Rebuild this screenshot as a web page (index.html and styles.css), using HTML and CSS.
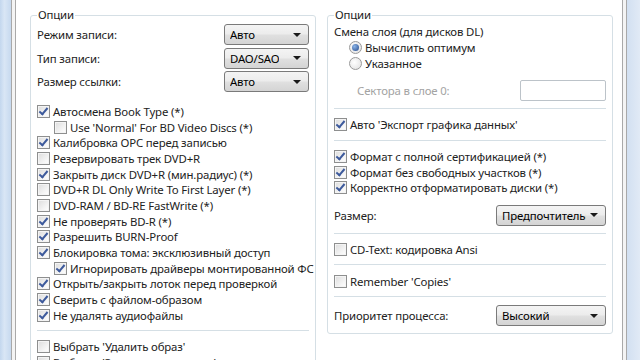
FILE: index.html
```html
<!doctype html>
<html>
<head>
    <meta charset="UTF-8">
    <title>Опции записи</title>
    <link rel="stylesheet" href="styles.css">
</head>
<body>
    <div class="window">
        <div class="frame frame-left"></div>
        <div class="edge"></div>
        <div class="page">
            <fieldset class="group group-left">
                <legend>Опции</legend>
                <div class="field">
                    <span>Режим записи:</span>
                    <div class="combo combo-small"><span>Авто</span><i class="arrow"></i></div>
                </div>
                <div class="field">
                    <span>Тип записи:</span>
                    <div class="combo combo-small"><span>DAO/SAO</span><i class="arrow"></i></div>
                </div>
                <div class="field">
                    <span>Размер ссылки:</span>
                    <div class="combo combo-small"><span>Авто</span><i class="arrow"></i></div>
                </div>

                <ul class="checks checks-main">
                    <li><span class="cb on"></span>Автосмена Book Type (*)</li>
                    <li class="sub"><span class="cb"></span>Use 'Normal' For BD Video Discs (*)</li>
                    <li><span class="cb on"></span>Калибровка OPC перед записью</li>
                    <li><span class="cb"></span>Резервировать трек DVD+R</li>
                    <li><span class="cb on"></span>Закрыть диск DVD+R (мин.радиус) (*)</li>
                    <li><span class="cb"></span>DVD+R DL Only Write To First Layer (*)</li>
                    <li><span class="cb"></span>DVD-RAM / BD-RE FastWrite (*)</li>
                    <li><span class="cb on"></span>Не проверять BD-R (*)</li>
                    <li><span class="cb on"></span>Разрешить BURN-Proof</li>
                    <li><span class="cb on"></span>Блокировка тома: эксклюзивный доступ</li>
                    <li class="sub"><span class="cb on"></span>Игнорировать драйверы монтированной ФС</li>
                    <li><span class="cb on"></span>Открыть/закрыть лоток перед проверкой</li>
                    <li><span class="cb on"></span>Сверить с файлом-образом</li>
                    <li><span class="cb on"></span>Не удалять аудиофайлы</li>
                </ul>
                <hr class="sep">
                <ul class="checks">
                    <li><span class="cb"></span>Выбрать 'Удалить образ'</li>
                    <li><span class="cb"></span>Выбрать 'Закрыть программу'</li>
                </ul>
            </fieldset>

            <fieldset class="group group-right">
                <legend>Опции</legend>
                <div class="caption">Смена слоя (для дисков DL)</div>
                <ul class="radios">
                    <li><span class="rb on"></span>Вычислить оптимум</li>
                    <li><span class="rb"></span>Указанное</li>
                </ul>
                <div class="field field-sectors">
                    <span class="disabled">Сектора в слое 0:</span>
                    <div class="textbox"></div>
                </div>
                <hr class="sep">
                <ul class="checks">
                    <li><span class="cb on"></span>Авто 'Экспорт графика данных'</li>
                </ul>
                <hr class="sep">
                <ul class="checks">
                    <li><span class="cb on"></span>Формат с полной сертификацией (*)</li>
                    <li><span class="cb on"></span>Формат без свободных участков (*)</li>
                    <li><span class="cb on"></span>Корректно отформатировать диски (*)</li>
                </ul>
                <div class="field field-size">
                    <span>Размер:</span>
                    <div class="combo combo-wide"><span>Предпочтительный</span><i class="arrow"></i></div>
                </div>
                <hr class="sep">
                <ul class="checks">
                    <li><span class="cb"></span>CD-Text: кодировка Ansi</li>
                </ul>
                <hr class="sep">
                <ul class="checks">
                    <li><span class="cb"></span>Remember 'Copies'</li>
                </ul>
                <hr class="sep">
                <div class="field field-priority">
                    <span>Приоритет процесса:</span>
                    <div class="combo combo-wide"><span>Высокий</span><i class="arrow"></i></div>
                </div>
            </fieldset>
        </div>
        <div class="edge"></div>
        <div class="frame frame-right"></div>
    </div>
</body>
</html>
```

FILE: styles.css
```css
html, body {
    margin: 0;
    padding: 0;
}
body {
    width: 640px;
    height: 360px;
    overflow: hidden;
    background: #fff;
    font-family: "Noto Sans", "Open Sans", sans-serif;
    font-size: 11.4px;
    letter-spacing: -0.15px;
    color: #222;
}

/* рамка окна по краям */
.window {
    display: flex;
    height: 360px;
}
.frame {
    flex: none;
}
.frame-left {
    width: 11px;
    background: linear-gradient(to right, #c3d7ee, #d9e6f5 40%, #c6d9ef);
}
.frame-right {
    width: 13px;
    background: linear-gradient(to right, #d2e0f1, #e1eaf6);
}
.edge {
    flex: none;
    width: 3px;
    border-left: 1px solid #a9a9a9;
    border-right: 1px solid #a9a9a9;
    background: #f4f4f4;
}

.page {
    flex: 1;
    display: flex;
    align-items: flex-start;
    gap: 11px;
    padding: 7px 3px 0 14px;
    overflow: hidden;
    background: #fff;
}

/* групповые рамки */
.group {
    margin: 0;
    padding: 0 6px 7px 6px;
    border: 1px solid #d5dfe5;
    border-radius: 3px;
    min-width: 0;
}
.group legend {
    padding: 0 1px;
    margin-left: 0;
    line-height: 16px;
}
.group-left {
    width: 272px;
    height: 400px;
}
.group-right {
    width: 272px;
}

.field {
    display: flex;
    align-items: center;
    justify-content: space-between;
    height: 23.5px;
}

/* выпадающий список в стиле Windows 7 */
.combo {
    display: flex;
    align-items: center;
    justify-content: space-between;
    box-sizing: border-box;
    height: 21px;
    padding: 0 7px 0 5px;
    border: 1px solid #7a7a7a;
    border-radius: 3px;
    background: linear-gradient(to bottom, #f4f4f4 0%, #ececec 48%, #e0e0e0 52%, #d4d4d4 100%);
    color: #000;
    overflow: hidden;
    white-space: nowrap;
}
.combo span {
    overflow: hidden;
}
.combo-small {
    width: 85px;
}
.combo-wide {
    width: 110px;
}
.arrow {
    flex: none;
    width: 0;
    height: 0;
    margin-left: 4px;
    border-left: 4px solid transparent;
    border-right: 4px solid transparent;
    border-top: 4px solid #1a1a1a;
}

/* флажки */
.checks {
    list-style: none;
    margin: 0;
    padding: 0;
}
.checks li {
    display: flex;
    align-items: center;
    height: 15.7px;
    white-space: nowrap;
}
.checks-main {
    margin-top: 10px;
}
.checks li.sub {
    padding-left: 17px;
}
.cb {
    position: relative;
    flex: none;
    box-sizing: border-box;
    width: 13px;
    height: 13px;
    margin-right: 3px;
    border: 1px solid #8e8f8f;
    background: linear-gradient(135deg, #dcdcdc, #f6f6f6 70%, #fff);
    box-shadow: inset 0 0 0 1px #f4f4f4;
}
.cb.on::after {
    content: "";
    position: absolute;
    left: 3px;
    top: 0;
    width: 3px;
    height: 7px;
    border-right: 2px solid #3d5a9c;
    border-bottom: 2px solid #3d5a9c;
    transform: rotate(40deg);
}

/* переключатели */
.caption {
    line-height: 16px;
    margin-top: 1px;
}
.radios {
    list-style: none;
    margin: 0;
    padding: 0 0 0 15px;
}
.radios li {
    display: flex;
    align-items: center;
    height: 15.5px;
}
.rb {
    position: relative;
    flex: none;
    box-sizing: border-box;
    width: 13px;
    height: 13px;
    margin-right: 3px;
    border: 1px solid #9a9a9a;
    border-radius: 50%;
    background: radial-gradient(circle at 40% 40%, #fff, #dedede);
}
.rb.on::after {
    content: "";
    position: absolute;
    left: 2px;
    top: 2px;
    width: 7px;
    height: 7px;
    border-radius: 50%;
    background: radial-gradient(circle at 35% 35%, #8ab4e8, #24498a);
}

.field-sectors {
    height: 21px;
    margin-top: 9px;
    padding-left: 23px;
}
.disabled {
    color: #a3a3a3;
}
.textbox {
    box-sizing: border-box;
    width: 86px;
    height: 21px;
    border: 1px solid #bcc3c9;
    border-radius: 2px;
    background: #fff;
}

.sep {
    margin: 7px 0 8px;
    border: 0;
    border-top: 1px solid #d5dfe5;
    height: 0;
}

.field-size {
    margin-top: 9px;
    height: 21px;
}
.field-priority {
    height: 21px;
}
```
